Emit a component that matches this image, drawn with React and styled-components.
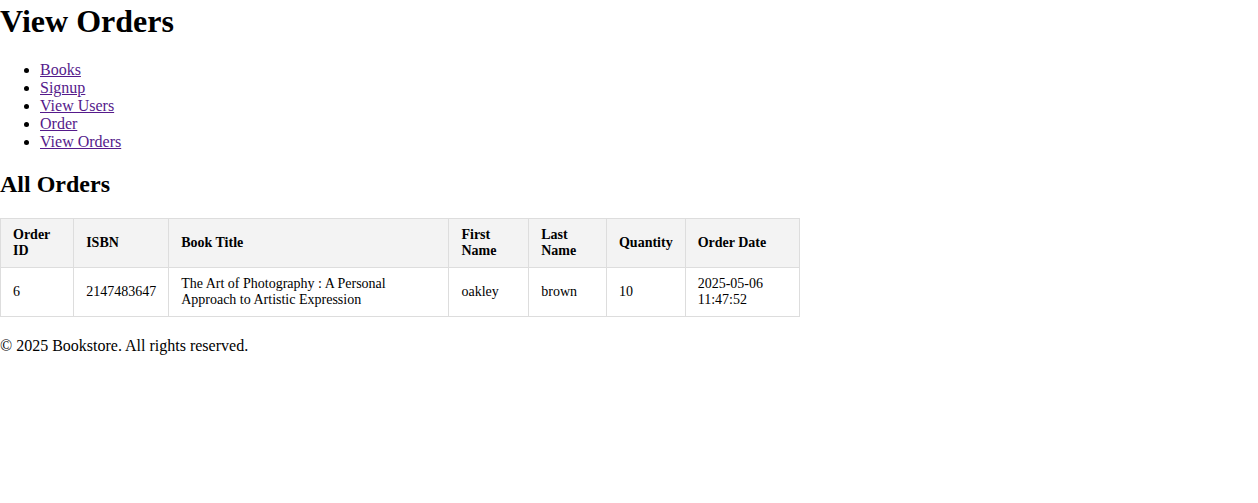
import styled, { createGlobalStyle } from 'styled-components';

const GlobalStyle = createGlobalStyle`
  body {
    margin: 0;
    font-family: "Liberation Serif", "Times New Roman", serif;
    background: #fff;
    color: #000;
  }
`;

const orders = [
  {
    id: 6,
    isbn: '2147483647',
    title: 'The Art of Photography : A Personal Approach to Artistic Expression',
    firstName: 'oakley',
    lastName: 'brown',
    quantity: 10,
    date: '2025-05-06 11:47:52',
  },
];

const navLinks = ['Books', 'Signup', 'View Users', 'Order', 'View Orders'];

const App = () => {
  return (
    <>
      <GlobalStyle />
      <Header>
        <Title>View Orders</Title>
        <Nav>
          {navLinks.map(link => (
            <li key={link}>
              <NavLink href="#">{link}</NavLink>
            </li>
          ))}
        </Nav>
      </Header>
      <main>
        <SectionTitle>All Orders</SectionTitle>
        <OrdersTable>
          <thead>
            <tr>
              <Th>Order ID</Th>
              <Th>ISBN</Th>
              <Th>Book Title</Th>
              <Th>First Name</Th>
              <Th>Last Name</Th>
              <Th>Quantity</Th>
              <Th>Order Date</Th>
            </tr>
          </thead>
          <tbody>
            {orders.map(order => (
              <tr key={order.id}>
                <Td>{order.id}</Td>
                <Td>{order.isbn}</Td>
                <Td>{order.title}</Td>
                <Td>{order.firstName}</Td>
                <Td>{order.lastName}</Td>
                <Td>{order.quantity}</Td>
                <Td>{order.date}</Td>
              </tr>
            ))}
          </tbody>
        </OrdersTable>
      </main>
      <Footer>&copy; 2025 Bookstore. All rights reserved.</Footer>
    </>
  );
};

const Header = styled.header``;

const Title = styled.h1`
  font-size: 32px;
  margin: 0 0 21.44px;
  padding-top: 3px;
`;

const Nav = styled.ul`
  margin: 16px 0;
  padding-left: 40px;
`;

const NavLink = styled.a`
  color: #551a8b;
`;

const SectionTitle = styled.h2`
  font-size: 24px;
  margin: 19.92px 0;
`;

const OrdersTable = styled.table`
  width: 800px;
  border-collapse: collapse;
  font-size: 14px;
  margin-top: 2px;
`;

const Th = styled.th`
  border: 1px solid #ddd;
  padding: 8px 12px;
  background-color: #f3f3f3;
  text-align: left;
`;

const Td = styled.td`
  border: 1px solid #ddd;
  padding: 8px 12px;
  text-align: left;
`;

const Footer = styled.footer`
  margin-top: 20px;
  font-size: 16px;
`;

export default App;
